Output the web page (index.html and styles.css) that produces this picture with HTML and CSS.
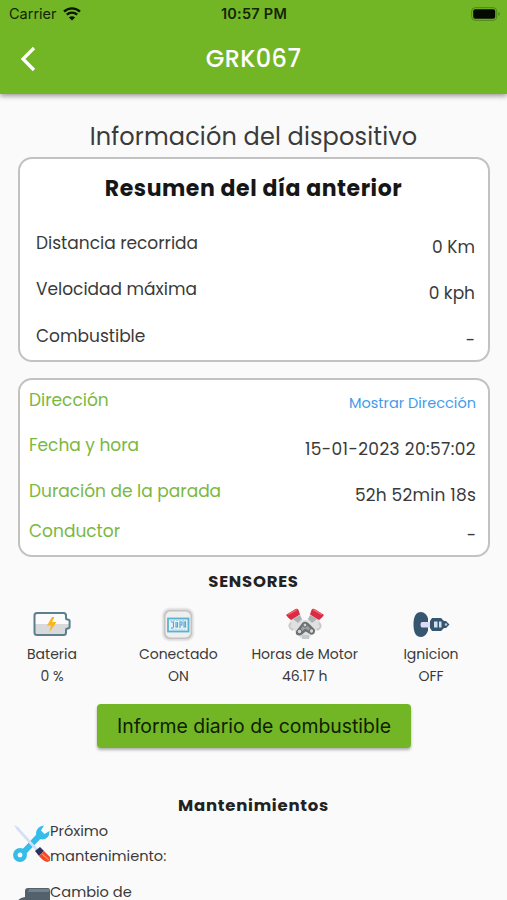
FILE: index.html
```
<!DOCTYPE html>
<html lang="es">

<head>
    <meta charset="UTF-8">
    <meta name="viewport" content="width=device-width, initial-scale=1.0">
    <title>GRK067</title>
    <link rel="stylesheet" href="styles.css">
</head>

<body>
    <header class="app-header">
        <div class="status-bar">
            <div class="carrier">
                <span>Carrier</span>
                <svg width="18" height="14" viewBox="0 0 18 14" fill="none" stroke="#0b1503" stroke-width="2.3">
                    <path d="M1 4.6C5.6.3 12.4.3 17 4.6"/>
                    <path d="M3.8 7.7c3-2.8 7.4-2.8 10.4 0"/>
                    <path d="M9 13.6L5.9 10.5c1.8-1.6 4.4-1.6 6.2 0z" fill="#0b1503" stroke="none"/>
                </svg>
            </div>
            <span class="clock">10:57 PM</span>
            <svg class="battery" width="30" height="14" viewBox="0 0 30 14">
                <rect x=".7" y=".7" width="25" height="12.6" rx="3.5" fill="none" stroke="#4d8518"/>
                <rect x="2.2" y="2.2" width="22" height="9.6" rx="2" fill="#050a00"/>
                <path d="M27.3 5c2 .7 2 3.3 0 4z" fill="#4d8518"/>
            </svg>
        </div>
        <div class="title-bar">
            <svg class="back" width="16" height="26" viewBox="0 0 16 26" fill="none" stroke="#fff" stroke-width="3.2">
                <path d="M14 2L3 13l11 11"/>
            </svg>
            <h1 class="device-name">GRK067</h1>
        </div>
    </header>

    <main>
        <h2 class="page-title">Información del dispositivo</h2>

        <section class="card summary">
            <h3 class="card-title">Resumen del día anterior</h3>
            <div class="row"><span>Distancia recorrida</span><span class="value">0 Km</span></div>
            <div class="row"><span>Velocidad máxima</span><span class="value">0 kph</span></div>
            <div class="row"><span>Combustible</span><span class="value">-</span></div>
        </section>

        <section class="card details">
            <div class="row"><span class="label">Dirección</span><a class="value link">Mostrar Dirección</a></div>
            <div class="row"><span class="label">Fecha y hora</span><span class="value date">15-01-2023 20:57:02</span></div>
            <div class="row"><span class="label">Duración de la parada</span><span class="value time">52h 52min 18s</span></div>
            <div class="row"><span class="label">Conductor</span><span class="value">-</span></div>
        </section>

        <h3 class="section-title sensors-title">SENSORES</h3>
        <div class="sensors">
            <div class="sensor">
                <svg width="40" height="36" viewBox="0 0 40 36">
                    <path d="M5 7h26l2 2v4l4 2v8l-4 2v2l-2 2H5q-3 0-3-3V10q0-3 3-3z" fill="#fbfbfb"/>
                    <path d="M2 18h35v5l-3 2v2l-2 2H5q-3 0-3-3z" fill="#d7d9db"/>
                    <path d="M5 7h26.500q2.500 0 2.500 2.500V12q0 1.500 1.500 1.500 2.100 0 2.100 1.700v5.600q0 1.700-2.100 1.700-1.500 0-1.500 1.500v2.500q0 2.500-2.500 2.500H5q-2.500 0-2.500-2.500v-17Q2.500 7 5 7z" fill="none" stroke="#5b7f8f" stroke-width="2"/>
                    <path d="M20 11l-5 8.500h4L17.500 26l7-10h-4.500l2.500-5z" fill="#f8b51c"/>
                </svg>
                <span>Bateria</span>
                <span>0 %</span>
            </div>
            <div class="sensor">
                <svg width="40" height="36" viewBox="0 0 40 36">
                    <rect x="3.500" y="1.500" width="33" height="34" rx="8" fill="#f0f0f0"/>
                    <rect x="4.500" y="2.500" width="31" height="32" rx="7.500" fill="#dedede"/>
                    <rect x="6" y="4" width="28" height="29" rx="6" fill="#c3c3c3"/>
                    <rect x="7.500" y="5.500" width="25" height="26" rx="5" fill="#efefef"/>
                    <rect x="10" y="12.500" width="20.500" height="13" fill="#e3f1f8" stroke="#59b3d0" stroke-width="1.800"/>
                    <path d="M13 16h2.500v4.500q0 2-2.500 1.500M18 16v5h1.500v-5M22 22v-6h2v3h-2M26 21v-5h1.500v5z" fill="none" stroke="#5ba3c6" stroke-width="1.100"/>
                    <path d="M12 14.500h16M14 23.800h13" stroke="#9fd2e4" stroke-width=".8" stroke-dasharray="2 1"/>
                </svg>
                <span>Conectado</span>
                <span>ON</span>
            </div>
            <div class="sensor">
                <svg width="40" height="36" viewBox="0 0 40 36">
                    <path d="M6 13l7-3 5 4h4l5-4 7 3 2 5-4 6-5 3-2 5H15l-2-5-5-3-4-6z" fill="#dfe0e0"/>
                    <path d="M8 13l7-4 2 4-4 4zM32 13l-7-4-2 4 4 4z" fill="#adb2b5"/>
                    <path d="M6 17q-4 4 2 7M34 17q4 4-2 7" fill="none" stroke="#c8caca" stroke-width="2"/>
                    <path d="M1 9L10.500 3q2-1 3 1l1.500 4.500-9 5.500q-2-1-5-5z" fill="#d92b42"/>
                    <path d="M39 9L29.500 3q-2-1-3 1L25 8.500l9 5.500q2-1 5-5z" fill="#d92b42"/>
                    <path d="M3 8.500L12 3.500M37 8.500L28 3.500" stroke="#f0606e" stroke-width="1.500"/>
                    <path d="M12 26l6-8q2-2 4.500 0l6 6q1 3-2 3.500l-6-3.500-5 4q-4 1-3.500-2z" fill="#9da1a3" stroke="#6e7274" stroke-width="2.500"/>
                    <g fill="#d2d4d5" stroke="#62666a">
                        <circle cx="20" cy="19" r="2"/>
                        <circle cx="14.500" cy="25.500" r="2.300"/>
                        <circle cx="26.500" cy="25" r="2.300"/>
                    </g>
                    <path d="M17 29h7v4h-7z" fill="#c5c8c9"/>
                </svg>
                <span>Horas de Motor</span>
                <span>46.17 h</span>
            </div>
            <div class="sensor">
                <svg width="40" height="36" viewBox="0 0 40 36">
                    <path d="M10 6q5 0 7 6.500v12Q15 31 10 31 2.500 31 2.500 18.500T10 6z" fill="#36566f"/>
                    <path d="M11 16h10v5.500H11q-1.500 0-1.500-2.700T11 16z" fill="#ded9f4"/>
                    <path d="M21 12h9l3 3h2l3.500 3.500L35 22h-2l-3 3h-9l-2-3v-7z" fill="#36566f"/>
                    <path d="M23 15.500h3.500v6H23zM28 15.500h2.500v6H28z" fill="#d4dff0"/>
                    <circle cx="35" cy="18.500" r="1.200" fill="#c1cddb"/>
                </svg>
                <span>Ignicion</span>
                <span>OFF</span>
            </div>
        </div>

        <button class="report-button">Informe diario de combustible</button>

        <h3 class="section-title maintenance-title">Mantenimientos</h3>
        <div class="maintenance">
            <svg width="38" height="40" viewBox="0 0 38 40">
                <path d="M9 31L28 11" stroke="#35bce9" stroke-width="6"/>
                <path d="M37.500 7q0 8-7 8.500-6.500 0-6.500-6.500 1-7 8-7.500l-3 5 3.500 3.500z" fill="#35bce9"/>
                <circle cx="8" cy="31" r="4.700" fill="#fafafa" stroke="#35bce9" stroke-width="4.500"/>
                <path d="M2 1l4 2 20 22-2 2L5 6z" fill="#d5def5"/>
                <path d="M23 27l5-4 4 4-5 5z" fill="#29335e"/>
                <path d="M27 32l5-5 6 6v4l-3 1q-4-1-8-6z" fill="#f4462c"/>
                <path d="M30 30l7 6" stroke="#ff8a4a" stroke-width="1.500"/>
            </svg>
            <span>Próximo<br>mantenimiento:</span>
        </div>
        <div class="maintenance">
            <svg width="38" height="40" viewBox="0 0 38 40">
                <path d="M16 3h20q2 0 2 3v14H4q1-7 9-8V6q0-3 3-3z" fill="#53616c"/>
                <path d="M17 4h20v3H16z" fill="#74808a"/>
            </svg>
            <span>Cambio de</span>
        </div>
    </main>
</body>

</html>
```

FILE: styles.css
```
* {
    box-sizing: border-box;
}

body {
    height: 900px;
    margin: 0;
    overflow: hidden;
    background: #fafafa;
    color: #3a3a3a;
    font-family: Poppins, Inter, sans-serif;
    font-size: 17px;
    font-weight: 400;
}

h1,
h2,
h3 {
    margin: 0;
}

.app-header {
    height: 94px;
    background: #72b626;
    box-shadow: 0 2px 5px rgba(0, 0, 0, 0.4);
}

.status-bar {
    display: grid;
    grid-template-columns: 1fr auto 1fr;
    align-items: center;
    height: 27px;
    padding: 0 6px 0 7px;
    color: #142405;
    font-family: Inter, sans-serif;
    font-size: 14.5px;
}

.carrier {
    display: flex;
    align-items: center;
    gap: 6px;
    padding-left: 2px;
}

.clock {
    font-weight: 600;
    letter-spacing: 0.25px;
}

.battery {
    justify-self: end;
}

.title-bar {
    display: grid;
    grid-template-columns: 40px 1fr 40px;
    align-items: center;
    height: 64px;
}

.back {
    margin-left: 20px;
}

.device-name {
    color: #fff;
    font-size: 24px;
    font-weight: 500;
    letter-spacing: 0.4px;
    line-height: 36px;
    text-align: center;
}

.page-title {
    padding-top: 25px;
    font-size: 24px;
    font-weight: 400;
    letter-spacing: 0.15px;
    line-height: 36px;
    text-align: center;
}

.card {
    margin: 2px 17px 0 18px;
    border: 2px solid #c2c2c2;
    border-radius: 14px;
    background: #fff;
}

.row {
    display: flex;
    justify-content: space-between;
    line-height: 24px;
}

.value {
    margin-top: 4px;
}

.summary {
    height: 205px;
    padding: 16px 13px 0 16px;
}

.card-title {
    margin-bottom: 28px;
    padding-right: 4px;
    color: #161616;
    font-size: 22px;
    font-weight: 700;
    letter-spacing: 0.55px;
    line-height: 28px;
    text-align: center;
}

.summary .row {
    height: 46px;
}

.summary .row:nth-child(3) {
    height: 47px;
}

.details {
    height: 179px;
    margin-top: 16px;
    padding: 8px 12px 0 9px;
}

.details .row {
    height: 45px;
}

.details .row:nth-child(2) {
    height: 46px;
}

.details .row:nth-child(3) {
    height: 40px;
}

.label {
    color: #7ab83f;
}

.link {
    margin-top: 3px;
    color: #3f9bea;
    font-size: 14.5px;
}

.date {
    letter-spacing: 0.38px;
}

.time {
    letter-spacing: 0.2px;
}

.section-title {
    color: #222;
    font-size: 16.5px;
    font-weight: 700;
    letter-spacing: 0.75px;
    line-height: 24px;
    text-align: center;
}

.sensors-title {
    margin-top: 13px;
}

.sensors {
    display: flex;
    justify-content: space-between;
    padding: 12px 24px 0 0;
}

.sensor {
    display: flex;
    flex-direction: column;
    align-items: center;
    width: 104px;
    font-size: 14px;
    line-height: 22px;
    white-space: nowrap;
}

.sensor svg {
    margin-bottom: 1px;
}

.report-button {
    display: block;
    width: 314px;
    height: 44px;
    margin: 17px 0 0 97px;
    padding: 0;
    border: none;
    border-radius: 4px;
    background: #72b626;
    box-shadow: 0 2px 3px rgba(0, 0, 0, 0.3);
    color: #102000;
    font-family: Inter, sans-serif;
    font-size: 19.4px;
}

.maintenance-title {
    margin-top: 46px;
}

.maintenance {
    display: flex;
    align-items: flex-start;
    height: 61px;
    padding-left: 12px;
    font-size: 14.6px;
    line-height: 24.5px;
}

.maintenance svg {
    margin-top: 6px;
}

.maintenance span {
    padding-top: 1px;
}
```
